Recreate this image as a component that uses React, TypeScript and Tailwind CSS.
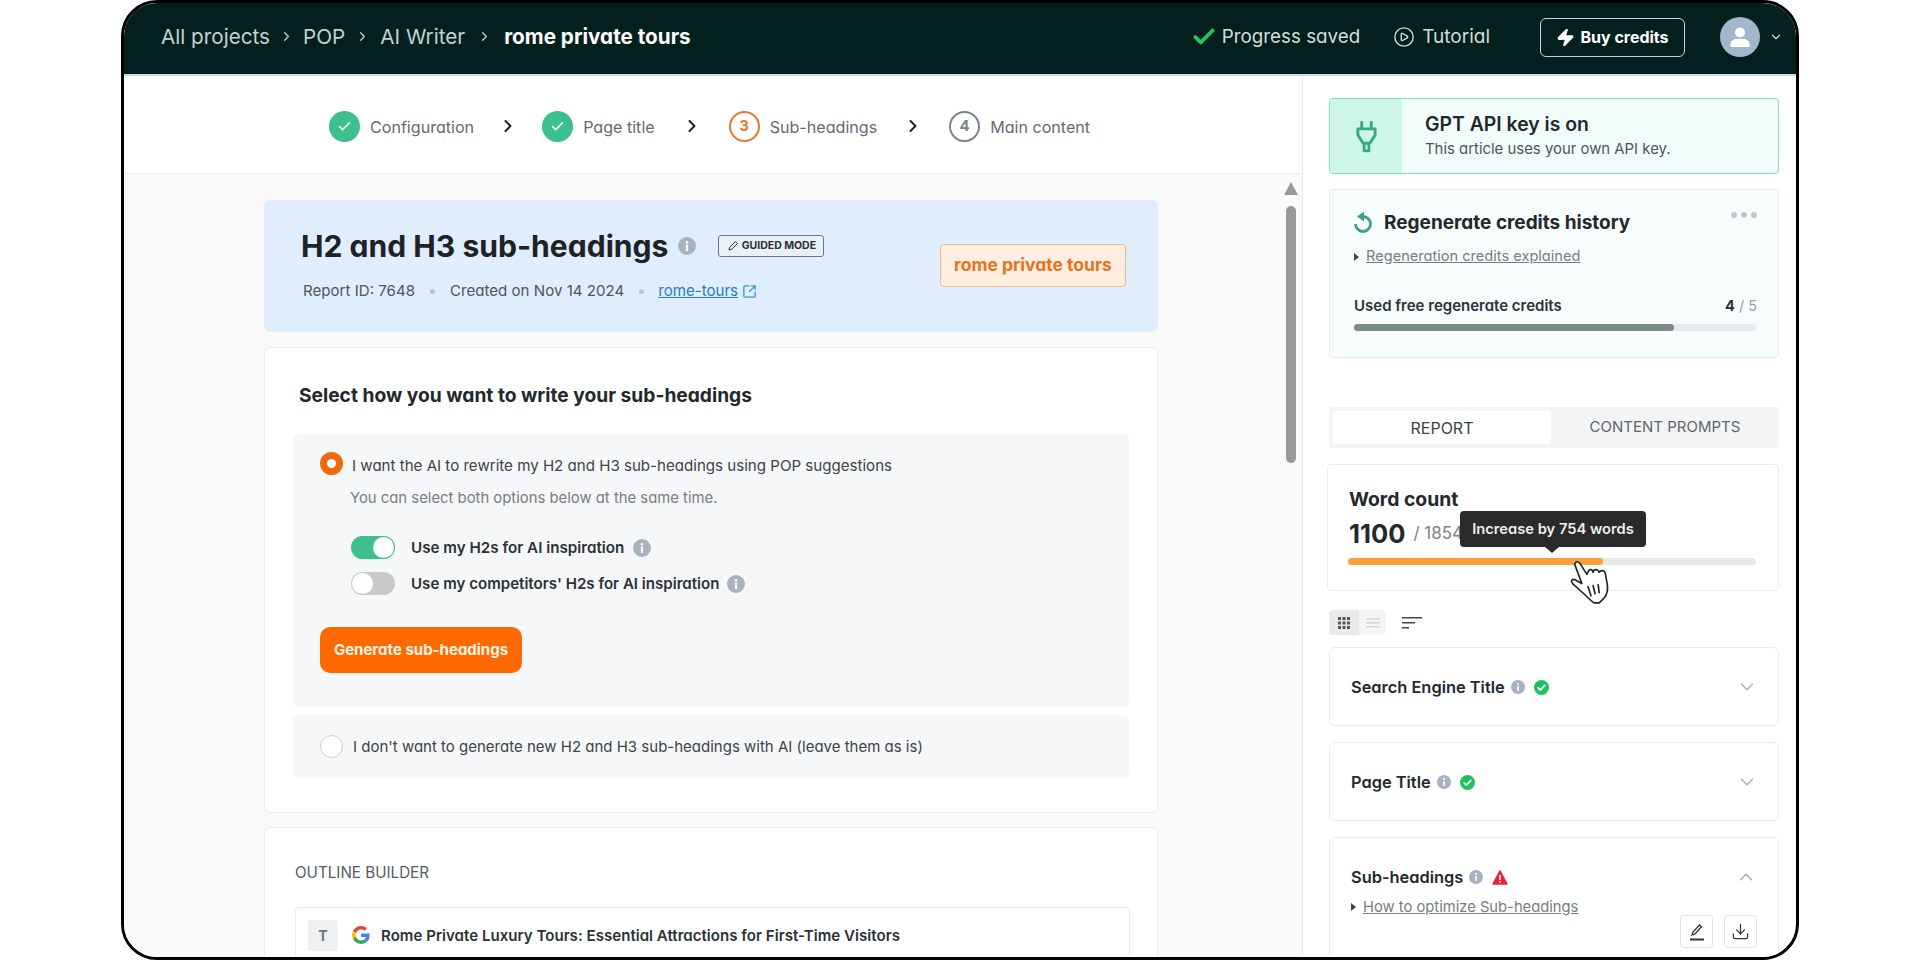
import React from 'react';
import { Check, ChevronDown, ChevronRight, ChevronUp, CirclePlay, Download, SquareArrowOutUpRight, Zap } from 'lucide-react';

const Info = ({ className }: { className: string }) => (
  <svg viewBox="0 0 18 18" className={className}>
    <circle cx="9" cy="9" r="9" fill="#a9b3bf" />
    <rect x="7.9" y="7.6" width="2.2" height="6.4" rx="0.6" fill="#fff" />
    <circle cx="9" cy="5.2" r="1.3" fill="#fff" />
  </svg>
);

const GreenTick = () => (
  <svg viewBox="0 0 16 16" className="h-[15px] w-[15px]">
    <circle cx="8" cy="8" r="8" fill="#1fc15e" />
    <path d="M4.5 8.3l2.4 2.4 4.6-5" fill="none" stroke="#fff" strokeWidth="1.8" strokeLinecap="round" strokeLinejoin="round" />
  </svg>
);

const Triangle = () => <span className="h-0 w-0 border-y-[4px] border-l-[5px] border-y-transparent border-l-[#444]" />;

const Step = ({ n, label, state }: { n: number; label: string; state: 'done' | 'active' | 'idle' }) => (
  <div className="flex items-center gap-[10px]">
    {state === 'done' && (
      <span className="flex h-[31px] w-[31px] items-center justify-center rounded-full bg-[#3cc08e]">
        <Check className="h-[15px] w-[15px] text-white" strokeWidth={2.5} />
      </span>
    )}
    {state === 'active' && (
      <span className="flex h-[31px] w-[31px] items-center justify-center rounded-full border-2 border-[#e8792f] text-[15px] font-bold text-[#e8792f]">{n}</span>
    )}
    {state === 'idle' && (
      <span className="flex h-[31px] w-[31px] items-center justify-center rounded-full border-2 border-[#7c8489] text-[15px] font-bold text-[#7c8489]">{n}</span>
    )}
    <span className="mt-[3px] text-[16.1px] text-[#666b6e]">{label}</span>
  </div>
);

const StepArrow = ({ className }: { className: string }) => <ChevronRight className={`h-[20px] w-[20px] text-[#222] ${className}`} strokeWidth={2.4} />;

const Toggle = ({ on }: { on: boolean }) => (
  <span className={`flex h-[23px] w-[44px] items-center rounded-full p-[1px] ${on ? 'justify-end bg-[#3cc08e]' : 'justify-start bg-[#c9c9c9]'}`}>
    <span className="h-[21px] w-[21px] rounded-full bg-white" />
  </span>
);

const Crumb = ({ label, gap }: { label: string; gap: string }) => (
  <>
    <span className="text-[#c5d0cf]">{label}</span>
    <ChevronRight className={`h-[15px] w-[15px] text-[#c5d0cf] ${gap}`} strokeWidth={2} />
  </>
);

const Accordion = ({ title }: { title: string }) => (
  <div className="flex h-[79px] items-center rounded-[6px] border border-[#ececec] bg-white pl-[21px] pr-[20px] pt-[1px]">
    <span className="text-[16.4px] font-semibold text-[#22292c]">{title}</span>
    <Info className="ml-[6px] h-[14px] w-[14px]" />
    <span className="ml-[9px]"><GreenTick /></span>
    <ChevronDown className="ml-auto h-[22px] w-[22px] text-[#a8adb0]" strokeWidth={1.5} />
  </div>
);

export default function App() {
  return (
    <div className="h-[960px] w-[1920px] overflow-hidden bg-white pl-[121px] [font-family:Inter,sans-serif] [font-feature-settings:'cv11']">
      <div className="flex h-[960px] w-[1678px] flex-col overflow-hidden rounded-[36px] border-[3px] border-black bg-white">
        <header className="flex h-[73px] shrink-0 items-center border-b-2 border-[#c9dbe6] bg-[#03201f] pb-[3px] pl-[37px] pr-[13px]">
          <nav className="flex items-center text-[20.7px]">
            <Crumb label="All projects" gap="mx-[9px]" />
            <Crumb label="POP" gap="mx-[10px]" />
            <Crumb label="AI Writer" gap="mx-[12px]" />
            <span className="font-bold text-white">rome private tours</span>
          </nav>
          <div className="ml-auto flex items-center text-[#d4dcdb]">
            <Check className="h-[26px] w-[26px] text-[#22c55e]" strokeWidth={3.5} />
            <span className="ml-[5px] text-[18.8px]">Progress saved</span>
            <CirclePlay className="ml-[33px] h-[22px] w-[22px]" strokeWidth={1.5} />
            <span className="ml-[7px] text-[19px]">Tutorial</span>
            <button className="ml-[50px] flex h-[39px] w-[145px] items-center justify-center gap-[5px] rounded-[6px] border-[1.5px] border-[#c8d2d2] text-[16px] font-bold text-white">
              <Zap className="h-[19px] w-[19px] fill-white text-white" />
              Buy credits
            </button>
            <span className="ml-[35px] flex h-[40px] w-[40px] items-center justify-center rounded-full bg-[#a3b6cb]">
              <svg viewBox="0 0 24 24" className="h-[24px] w-[24px]" fill="#fff">
                <circle cx="12" cy="7.5" r="5" />
                <path d="M2.5 22v-2.5c0-3.5 3-5.5 6-5.5h7c3 0 6 2 6 5.5V22z" />
              </svg>
            </span>
            <ChevronDown className="ml-[9px] h-[14px] w-[14px]" strokeWidth={2} />
          </div>
        </header>

        <div className="flex min-h-0 flex-1">
          <section className="flex w-[1179px] shrink-0 flex-col border-r border-[#ececec] bg-[#fafafa]">
            <div className="flex h-[98px] shrink-0 items-center border-b border-[#ececec] bg-white pl-[205px] pt-[3px]">
              <Step n={1} label="Configuration" state="done" />
              <StepArrow className="mx-[24px]" />
              <Step n={2} label="Page title" state="done" />
              <StepArrow className="mx-[27px]" />
              <Step n={3} label="Sub-headings" state="active" />
              <StepArrow className="mx-[26px]" />
              <Step n={4} label="Main content" state="idle" />
            </div>

            <div className="flex min-h-0 flex-1 overflow-hidden pl-[140px] pt-[26px]">
              <div className="w-[894px] shrink-0">
                <div className="flex h-[132px] justify-between rounded-[6px] bg-[#e0edfc] pl-[37px] pr-[32px]">
                  <div className="pt-[26px]">
                    <div className="flex h-[40px] items-center">
                      <h1 className="text-[30.1px] font-bold leading-none text-[#1c2226]">H2 and H3 sub-headings</h1>
                      <Info className="ml-[10px] h-[18px] w-[18px]" />
                      <span className="ml-[22px] flex h-[22px] w-[106px] items-center justify-center gap-[3px] rounded-[3px] border border-[#6b7680] bg-[#e8f0fa] text-[10.5px] font-bold text-[#2b3236]">
                        <svg viewBox="0 0 12 12" className="h-[12px] w-[12px]" fill="none" stroke="#333" strokeWidth="1">
                          <path d="M2 10l.6-2.6L8.4 1.6l2 2-5.8 5.8z" />
                        </svg>
                        GUIDED MODE
                      </span>
                    </div>
                    <div className="mt-[15px] flex h-[20px] items-center pl-[2px] text-[15.1px] text-[#4f565b]">
                      <span>Report ID: 7648</span>
                      <span className="mx-[15px] h-[5px] w-[5px] rounded-full bg-[#b9c5d2]" />
                      <span>Created on Nov 14 2024</span>
                      <span className="mx-[14.5px] h-[5px] w-[5px] rounded-full bg-[#b9c5d2]" />
                      <span className="text-[#1f7fc4] underline">rome-tours</span>
                      <SquareArrowOutUpRight className="ml-[4px] h-[15px] w-[15px] text-[#3d95d6]" strokeWidth={2.2} />
                    </div>
                  </div>
                  <div className="mb-[2px] flex h-[43px] w-[186px] items-center justify-center self-center rounded-[4px] border border-[#efb88f] bg-[#fdeee0] text-[17.5px] font-bold text-[#e5741f]">
                    rome private tours
                  </div>
                </div>

                <div className="mt-[15px] h-[466px] rounded-[6px] border border-[#ececec] bg-white pl-[28px] pr-[28px] pt-[35px]">
                  <h2 className="h-[24px] pl-[6px] text-[19.2px] font-bold leading-[24px] text-[#22292c]">Select how you want to write your sub-headings</h2>
                  <div className="mt-[27px] h-[273px] rounded-[6px] bg-[#f6f7f8] pl-[27px] pt-[18px]">
                    <div className="flex h-[23px] items-center">
                      <span className="flex h-[23px] w-[23px] items-center justify-center rounded-full bg-[#f06a0c]">
                        <span className="h-[9px] w-[9px] rounded-full bg-white" />
                      </span>
                      <span className="ml-[9px] mt-[5px] text-[15.1px] text-[#3d4448]">I want the AI to rewrite my H2 and H3 sub-headings using POP suggestions</span>
                    </div>
                    <p className="mt-[13px] h-[20px] pl-[30px] text-[14.85px] leading-[20px] text-[#777d81]">You can select both options below at the same time.</p>
                    <div className="mt-[28px] flex h-[23px] items-center pl-[31px]">
                      <Toggle on />
                      <span className="ml-[16px] mt-[2px] text-[15.2px] font-semibold text-[#2b3236]">Use my H2s for AI inspiration</span>
                      <Info className="ml-[9px] h-[18px] w-[18px]" />
                    </div>
                    <div className="mt-[13px] flex h-[23px] items-center pl-[31px]">
                      <Toggle on={false} />
                      <span className="ml-[16px] mt-[2px] text-[15.1px] font-semibold text-[#2b3236]">Use my competitors' H2s for AI inspiration</span>
                      <Info className="ml-[8px] h-[18px] w-[18px]" />
                    </div>
                    <button className="mt-[32px] h-[46px] w-[202px] rounded-[10px] bg-[#ff6a00] text-[15px] font-bold text-[#fff3e6]">Generate sub-headings</button>
                  </div>
                  <div className="mt-[8px] flex h-[63px] items-center rounded-[6px] bg-[#f6f7f8] pl-[27px]">
                    <span className="h-[23px] w-[23px] rounded-full border border-[#c9cdd0] bg-white" />
                    <span className="ml-[10px] mt-[1px] text-[15px] text-[#3d4448]">I don't want to generate new H2 and H3 sub-headings with AI (leave them as is)</span>
                  </div>
                </div>

                <div className="mt-[14px] h-[200px] rounded-[6px] border border-[#ececec] bg-white pl-[30px] pr-[27px] pt-[35px]">
                  <div className="h-[20px] text-[15.2px] leading-[20px] text-[#555b5f]">OUTLINE BUILDER</div>
                  <div className="mt-[24px] flex h-[80px] items-start rounded-[4px] border border-[#ececec] pl-[12px] pt-[12px]">
                    <span className="flex h-[31px] w-[30px] items-center justify-center rounded-[2px] bg-[#eff0f1] text-[14px] font-bold text-[#6f767a]">T</span>
                    <svg viewBox="0 0 48 48" className="ml-[14px] mt-[6px] h-[18px] w-[18px]">
                      <path fill="#EA4335" d="M24 9.5c3.5 0 6.700 1.300 9.100 3.400l6.800-6.800C35.800 2.400 30.300 0 24 0 14.600 0 6.500 5.400 2.600 13.200l7.900 6.100C12.400 13.700 17.700 9.500 24 9.500z" />
                      <path fill="#4285F4" d="M47 24.500c0-1.600-.1-3.100-.4-4.500H24v9h13c-.6 3-2.300 5.500-4.800 7.200l7.700 6c4.500-4.200 7.100-10.300 7.100-17.700z" />
                      <path fill="#FBBC05" d="M10.500 28.700c-.5-1.500-.8-3-.8-4.700s.3-3.200.8-4.700l-7.900-6.100C1 16.400 0 20.100 0 24s1 7.600 2.600 10.800z" />
                      <path fill="#34A853" d="M24 48c6.500 0 11.900-2.100 15.900-5.800l-7.700-6c-2.200 1.400-4.900 2.300-8.200 2.300-6.300 0-11.600-4.200-13.500-9.800l-7.900 6.100C6.500 42.600 14.600 48 24 48z" />
                    </svg>
                    <span className="ml-[11px] mt-[5px] text-[15.1px] font-semibold text-[#2b3236]">Rome Private Luxury Tours: Essential Attractions for First-Time Visitors</span>
                  </div>
                </div>
              </div>

              <div className="ml-[126px] flex flex-col items-center">
                <span className="-mt-[18px] h-0 w-0 border-x-[7px] border-b-[13px] border-x-transparent border-b-[#999]" />
                <span className="mt-[11px] h-[257px] w-[10px] rounded-full bg-[#999]" />
              </div>
            </div>
          </section>

          <aside className="min-w-0 flex-1 pl-[26px] pr-[17px] pt-[22px]">
            <div className="flex h-[76px] overflow-hidden rounded-[4px] border border-[#7fdfbb] bg-[#f0fdfb]">
              <div className="flex w-[72px] items-center justify-center bg-[#cff7e8]">
                <svg viewBox="0 0 24 34" className="h-[33px] w-[23px]" fill="none" stroke="#37a884" strokeWidth="3" strokeLinejoin="round">
                  <path d="M7 1v8M17 1v8M3 9h18v6.500L15.500 24h-7L3 15.500zM9.500 24v8h5v-8" />
                </svg>
              </div>
              <div className="pl-[23px] pt-[11px]">
                <div className="text-[19.4px] font-semibold leading-[28px] text-[#22292c]">GPT API key is on</div>
                <div className="text-[14.9px] leading-[22px] text-[#4f565b]">This article uses your own API key.</div>
              </div>
            </div>

            <div className="mt-[15px] h-[169px] rounded-[4px] border border-[#e6edef] bg-[#f7fdfd] pl-[24px] pr-[21px] pt-[21px]">
              <div className="flex h-[22px] items-center">
                <svg viewBox="0 0 20 22" className="-ml-[1px] h-[22px] w-[20px]" fill="none" stroke="#3aa37f" strokeWidth="2.800">
                  <path d="M10 5.500a7.500 7.500 0 1 1-7.500 7.500" />
                  <path d="M4 5.500L11 .5v10z" fill="#3aa37f" stroke="none" />
                </svg>
                <span className="ml-[11px] mt-[3px] text-[19px] font-bold text-[#22292c]">Regenerate credits history</span>
                <span className="ml-auto mb-[14px] flex gap-[4px]">
                  <span className="h-[6px] w-[6px] rounded-full bg-[#c3c8ca]" />
                  <span className="h-[6px] w-[6px] rounded-full bg-[#c3c8ca]" />
                  <span className="h-[6px] w-[6px] rounded-full bg-[#c3c8ca]" />
                </span>
              </div>
              <div className="mt-[14px] flex h-[20px] items-center gap-[7px]">
                <Triangle />
                <span className="text-[14.6px] text-[#777d81] underline">Regeneration credits explained</span>
              </div>
              <div className="mt-[29px] flex h-[20px] items-center justify-between">
                <span className="text-[15px] font-semibold text-[#2b3236]">Used free regenerate credits</span>
                <span className="text-[14.5px] text-[#9aa0a3]"><b className="text-[#2b3236]">4</b> / 5</span>
              </div>
              <div className="mt-[8px] h-[7px] w-[402px] rounded-full bg-[#e5ebee]">
                <div className="h-full w-[320px] rounded-full bg-[#7c8a88]" />
              </div>
            </div>

            <div className="mt-[49px] flex h-[41px] items-center rounded-[4px] bg-[#f3f4f6] pl-[4px] text-[15px]">
              <div className="flex h-[33px] w-[218px] items-center justify-center rounded-[3px] bg-white text-[16px] text-[#3d4448]">REPORT</div>
              <div className="flex-1 text-center text-[#5f666a]">CONTENT PROMPTS</div>
            </div>

            <div className="relative -ml-[2px] mt-[16px] h-[127px] rounded-[4px] border border-[#ececec] bg-white pl-[20px] pt-[22px]">
              <div className="h-[24px] pl-[1px] text-[19.3px] font-bold leading-[24px] text-[#22292c]">Word count</div>
              <div className="mt-[7px] flex h-[32px] items-center gap-[8px] pl-[1px]">
                <span className="text-[25.5px] font-bold text-[#22292c]">1100</span>
                <span className="text-[17px] text-[#7c8286]">/ 1854</span>
              </div>
              <div className="mt-[8px] h-[7px] w-[408px] rounded-full bg-[#e8e8e8]">
                <div className="h-full w-[255px] rounded-full bg-[#f7a138]" />
              </div>
              <div className="absolute left-[132px] top-[46px] flex h-[36px] w-[186px] items-center justify-center rounded-[4px] bg-[#2a2a2a] text-[14.7px] font-semibold text-[#eee]">
                Increase by 754 words
                <span className="absolute left-[85px] top-[36px] h-0 w-0 border-x-[7px] border-t-[6px] border-x-transparent border-t-[#2a2a2a]" />
              </div>
              <svg viewBox="0 0 42 46" className="absolute left-[240px] top-[94px] h-[47px] w-[46px]" fill="#fff" stroke="#222" strokeWidth="1.600" strokeLinejoin="round" strokeLinecap="round">
                <path d="M5 5Q7 1 10 4L17 15L19 11Q22 9 23 13L24 11Q27 9 29 13L30 12Q34 10 35 14L37 25Q38 33 34 38L29 43L24 43Q20 40 14 34L3 24Q0 20 5 20L12 24Z" />
                <path d="M18 27l3 9M23 26l2 8M28 25l1 8" fill="none" />
              </svg>
            </div>

            <div className="mt-[19px] flex h-[25px] items-center">
              <span className="flex h-[25px] w-[30px] items-center justify-center rounded-l-[4px] bg-[#e8e9eb]">
                <svg viewBox="0 0 12 12" className="h-[12px] w-[12px]" fill="#555">
                  <rect x="0" y="0" width="3" height="3" /><rect x="4.500" y="0" width="3" height="3" /><rect x="9" y="0" width="3" height="3" />
                  <rect x="0" y="4.500" width="3" height="3" /><rect x="4.500" y="4.500" width="3" height="3" /><rect x="9" y="4.500" width="3" height="3" />
                  <rect x="0" y="9" width="3" height="3" /><rect x="4.500" y="9" width="3" height="3" /><rect x="9" y="9" width="3" height="3" />
                </svg>
              </span>
              <span className="flex h-[25px] w-[27px] items-center justify-center rounded-r-[4px] bg-[#f5f5f6]">
                <svg viewBox="0 0 14 12" className="h-[12px] w-[14px]" fill="#d4d6d8">
                  <rect x="0" y="1" width="14" height="1.600" /><rect x="0" y="5" width="14" height="1.600" /><rect x="0" y="9" width="14" height="1.600" />
                </svg>
              </span>
              <svg viewBox="0 0 20 12" className="ml-[16px] h-[12px] w-[20px]" fill="#444">
                <rect x="0" y="0" width="20" height="1.500" /><rect x="0" y="5" width="13" height="1.500" /><rect x="0" y="10" width="7" height="1.500" />
              </svg>
            </div>

            <div className="mt-[12px] flex flex-col gap-[16px]">
              <Accordion title="Search Engine Title" />
              <Accordion title="Page Title" />
              <div className="h-[200px] rounded-[6px] border border-[#ececec] bg-white pl-[21px] pr-[21px] pt-[29px]">
                <div className="flex h-[20px] items-center">
                  <span className="text-[16.4px] font-semibold text-[#22292c]">Sub-headings</span>
                  <Info className="ml-[6px] h-[14px] w-[14px]" />
                  <svg viewBox="0 0 16 15" className="ml-[9px] h-[15px] w-[16px]">
                    <path d="M8 1L15 14H1z" fill="#e8213a" stroke="#e8213a" strokeWidth="1.500" strokeLinejoin="round" />
                    <rect x="7.200" y="5" width="1.600" height="5" fill="#fff" />
                    <rect x="7.200" y="11" width="1.600" height="1.600" fill="#fff" />
                  </svg>
                  <ChevronUp className="ml-auto h-[22px] w-[22px] text-[#a8adb0]" strokeWidth={1.5} />
                </div>
                <div className="mt-[10px] flex h-[20px] items-center gap-[7px]">
                  <Triangle />
                  <span className="text-[14.75px] text-[#777d81] underline">How to optimize Sub-headings</span>
                </div>
                <div className="-mt-[2px] flex justify-end gap-[11px]">
                  <span className="flex h-[33px] w-[33px] items-center justify-center rounded-[4px] border border-[#e2e2e2]">
                    <svg viewBox="0 0 18 18" className="h-[18px] w-[18px]" fill="none" stroke="#333" strokeWidth="1.300">
                      <path d="M4 12l1-3 6.500-7 2 1.800L7 11z" />
                      <path d="M2 16.500h14" strokeWidth="1.800" />
                    </svg>
                  </span>
                  <span className="flex h-[33px] w-[33px] items-center justify-center rounded-[4px] border border-[#e2e2e2]">
                    <Download className="h-[19px] w-[19px] text-[#333]" strokeWidth={1.5} />
                  </span>
                </div>
              </div>
            </div>
          </aside>
        </div>
      </div>
    </div>
  );
}
